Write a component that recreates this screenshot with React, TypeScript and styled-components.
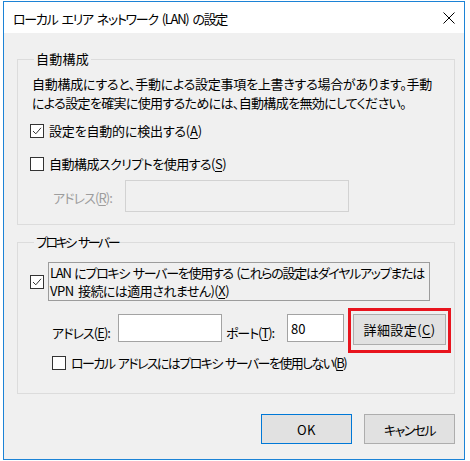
import React, { useLayoutEffect, useRef, useState } from 'react'
import styled, { createGlobalStyle } from 'styled-components'

const GlobalStyle = createGlobalStyle`
    html, body {
        margin: 0;
        padding: 0;
        background: #ffffff;
    }
    body {
        font-family: "Noto Sans CJK JP", "Noto Sans", sans-serif;
        font-size: 13px;
        font-feature-settings: "palt";
        color: #000;
    }
`

const Window = styled.div`
    box-sizing: border-box;
    width: 462px;
    height: 459px;
    margin: 1px 0 0 3px;
    border: 1px solid #1c83d6;
    background: #f0f0f0;
    display: flex;
    flex-direction: column;
`

const TitleBar = styled.div`
    height: 31px;
    flex-shrink: 0;
    background: #ffffff;
    display: flex;
    align-items: center;
    justify-content: space-between;
    padding: 1px 9px 0 9px;
    box-sizing: border-box;
`

const CloseButton = styled.button`
    border: none;
    background: transparent;
    padding: 0;
    width: 12px;
    height: 12px;
    display: flex;
    cursor: pointer;
`

const Body = styled.div`
    flex: 1;
    display: flex;
    flex-direction: column;
    padding: 18px 9px 0 13px;
`

const Group = styled.fieldset<{ $gap?: number; $pb: number; $pt: number }>`
    margin: ${({ $gap }) => $gap || 0}px 0 0 0;
    padding: ${({ $pt }) => $pt}px 0 ${({ $pb }) => $pb}px 12px;
    border: 1px solid #dcdcdc;
    display: flex;
    flex-direction: column;
    min-width: 0;
`

const Legend = styled.legend`
    margin-left: 4px;
    padding: 0 2px;
    line-height: 16px;
`

const Description = styled.div`
    margin: 0 0 0 2px;
    line-height: 19px;
`

const CheckRow = styled.label<{ $mt?: number; $indent?: number }>`
    display: flex;
    align-items: center;
    gap: 5px;
    line-height: 19px;
    margin-top: ${({ $mt }) => $mt || 0}px;
    margin-left: ${({ $indent }) => $indent || 0}px;
`

const Box = styled.span`
    box-sizing: border-box;
    width: 14px;
    height: 14px;
    flex-shrink: 0;
    border: 1px solid #333333;
    background: #ffffff;
    display: flex;
`

const FocusLabel = styled.span`
    box-sizing: border-box;
    width: 382px;
    margin-left: -1px;
    padding: 1px 0 0 1px;
    border: 1px solid #9c9c9c;
    line-height: 18px;
`

const Key = styled.span`
    text-decoration: underline;
    text-underline-offset: 2px;
`

const FieldRow = styled.div<{ $mt?: number; $indent?: number }>`
    display: flex;
    align-items: center;
    margin-top: ${({ $mt }) => $mt || 0}px;
    margin-left: ${({ $indent }) => $indent || 0}px;
`

const FieldLabel = styled.span<{ $w: number; $disabled?: boolean; $pl?: number }>`
    width: ${({ $w }) => $w}px;
    flex-shrink: 0;
    padding-left: ${({ $pl }) => $pl || 0}px;
    box-sizing: border-box;
    padding-top: 3px;
    color: ${({ $disabled }) => ($disabled ? '#9d9d9d' : '#000')};
    white-space: nowrap;
`

const TextBox = styled.input<{ $w: number; $h: number; $disabled?: boolean }>`
    box-sizing: border-box;
    width: ${({ $w }) => $w}px;
    height: ${({ $h }) => $h}px;
    flex-shrink: 0;
    margin: 0;
    padding: 0 3px;
    font: inherit;
    color: #000;
    background: ${({ $disabled }) => ($disabled ? '#f0f0f0' : '#ffffff')};
    border: 1px solid ${({ $disabled }) => ($disabled ? '#d2d2d2' : '#a3a3a3')};
    outline: none;
`

const TopAligned = styled.div`
    align-self: flex-start;
    margin-top: 6px;
    display: flex;
`

const Highlight = styled.div`
    box-sizing: border-box;
    width: 103px;
    height: 45px;
    margin-left: 4px;
    border: 3px solid #e8141e;
    padding: 3px 2px 0 2px;
`

const Button = styled.button<{ $default?: boolean; $w?: number; $h?: number }>`
    box-sizing: border-box;
    width: ${({ $w }) => $w || 91}px;
    height: ${({ $h }) => $h || 30}px;
    margin: 0;
    padding: 0;
    font: inherit;
    color: #000;
    background: #e1e1e1;
    border: 1px solid ${({ $default }) => ($default ? '#0078d7' : '#adadad')};
    cursor: pointer;
`

const Footer = styled.div`
    display: flex;
    justify-content: flex-end;
    gap: 12px;
    margin-top: 20px;
`

const FitText = styled.span<{ $block?: boolean; $ws: number }>`
    display: ${({ $block }) => ($block ? 'block' : 'inline-block')};
    white-space: nowrap;
    word-spacing: ${({ $ws }) => $ws}px;
`

// the dialog font has narrow kana, so each run of text is squeezed to the width it has in the screenshot
const Fit = ({
    w,
    ws = 2,
    block,
    children,
}: {
    w: number
    ws?: number
    block?: boolean
    children: React.ReactNode
}) => {
    const ref = useRef<HTMLSpanElement>(null)
    const [spacing, setSpacing] = useState<number | null>(null)

    useLayoutEffect(() => {
        const measure = () => {
            const el = ref.current
            if (!el) return
            const text = el.textContent || ''
            const probe = document.createElement('span')
            probe.style.cssText =
                'position:absolute;visibility:hidden;white-space:nowrap;letter-spacing:0;word-spacing:0'
            probe.textContent = text
            el.parentElement?.appendChild(probe)
            const natural = probe.getBoundingClientRect().width
            probe.remove()
            const chars = Array.from(text)
            const spaces = chars.filter((c) => c === ' ').length
            if (chars.length) setSpacing((w - natural - spaces * ws) / chars.length)
        }
        measure()
        document.fonts?.ready.then(measure)
    }, [w, ws])

    return (
        <FitText
            ref={ref}
            $block={block}
            $ws={ws}
            style={spacing === null ? undefined : { letterSpacing: `${spacing}px` }}
        >
            {children}
        </FitText>
    )
}

const Check = ({ checked }: { checked?: boolean }) => (
    <Box>
        {checked && (
            <svg width="12" height="12" viewBox="0 0 12 12">
                <polyline
                    points="2,6 4.8,8.8 10,2.8"
                    fill="none"
                    stroke="#333"
                    strokeWidth="1"
                />
            </svg>
        )}
    </Box>
)

const App = () => {
    return (
        <React.Fragment>
            <GlobalStyle />
            <Window>
                <TitleBar>
                    <Fit w={214} ws={2.5}>
                        ローカル エリア ネットワーク (LAN) の設定
                    </Fit>
                    <CloseButton aria-label="閉じる">
                        <svg width="12" height="12" viewBox="0 0 12 12">
                            <path d="M0.5 0.5 L11.5 11.5 M11.5 0.5 L0.5 11.5" stroke="#000" strokeWidth="1" />
                        </svg>
                    </CloseButton>
                </TitleBar>

                <Body>
                    <Group $pt={7} $pb={12}>
                        <Legend>
                            <Fit w={53}>自動構成</Fit>
                        </Legend>
                        <Description>
                            <Fit w={400} block>
                                自動構成にすると、手動による設定事項を上書きする場合があります。手動
                            </Fit>
                            <Fit w={374} block>
                                による設定を確実に使用するためには、自動構成を無効にしてください。
                            </Fit>
                        </Description>
                        <CheckRow $mt={9}>
                            <Check checked />
                            <Fit w={153}>
                                設定を自動的に検出する(<Key>A</Key>)
                            </Fit>
                        </CheckRow>
                        <CheckRow $mt={14}>
                            <Check />
                            <Fit w={177}>
                                自動構成スクリプトを使用する(<Key>S</Key>)
                            </Fit>
                        </CheckRow>
                        <FieldRow $mt={7} $indent={23}>
                            <FieldLabel $w={72} $disabled>
                                <Fit w={59}>
                                    アドレス(<Key>R</Key>):
                                </Fit>
                            </FieldLabel>
                            <TextBox $w={224} $h={32} $disabled disabled />
                        </FieldRow>
                    </Group>

                    <Group $gap={9} $pt={12} $pb={21}>
                        <Legend>
                            <Fit w={82} ws={3}>
                                プロキシ サーバー
                            </Fit>
                        </Legend>
                        <CheckRow>
                            <Check checked />
                            <FocusLabel>
                                <Fit w={374} block>
                                    LAN にプロキシ サーバーを使用する (これらの設定はダイヤルアップまたは
                                </Fit>
                                <Fit w={179} block>
                                    VPN 接続には適用されません)(<Key>X</Key>)
                                </Fit>
                            </FocusLabel>
                        </CheckRow>
                        <FieldRow $mt={7} $indent={22}>
                            <FieldLabel $w={66}>
                                <Fit w={58}>
                                    アドレス(<Key>E</Key>):
                                </Fit>
                            </FieldLabel>
                            <TopAligned>
                                <TextBox $w={104} $h={28} />
                            </TopAligned>
                            <FieldLabel $w={65} $pl={4}>
                                <Fit w={48}>
                                    ポート(<Key>T</Key>):
                                </Fit>
                            </FieldLabel>
                            <TopAligned>
                                <TextBox $w={57} $h={28} defaultValue="80" />
                            </TopAligned>
                            <Highlight>
                                <Button $w={93} $h={31}>
                                    <Fit w={72}>
                                        詳細設定(<Key>C</Key>)
                                    </Fit>
                                </Button>
                            </Highlight>
                        </FieldRow>
                        <CheckRow $indent={22}>
                            <Check />
                            <Fit w={275}>
                                ローカル アドレスにはプロキシ サーバーを使用しない(<Key>B</Key>)
                            </Fit>
                        </CheckRow>
                    </Group>

                    <Footer>
                        <Button $default>
                            <Fit w={19}>OK</Fit>
                        </Button>
                        <Button>
                            <Fit w={51}>キャンセル</Fit>
                        </Button>
                    </Footer>
                </Body>
            </Window>
        </React.Fragment>
    )
}

export default App
